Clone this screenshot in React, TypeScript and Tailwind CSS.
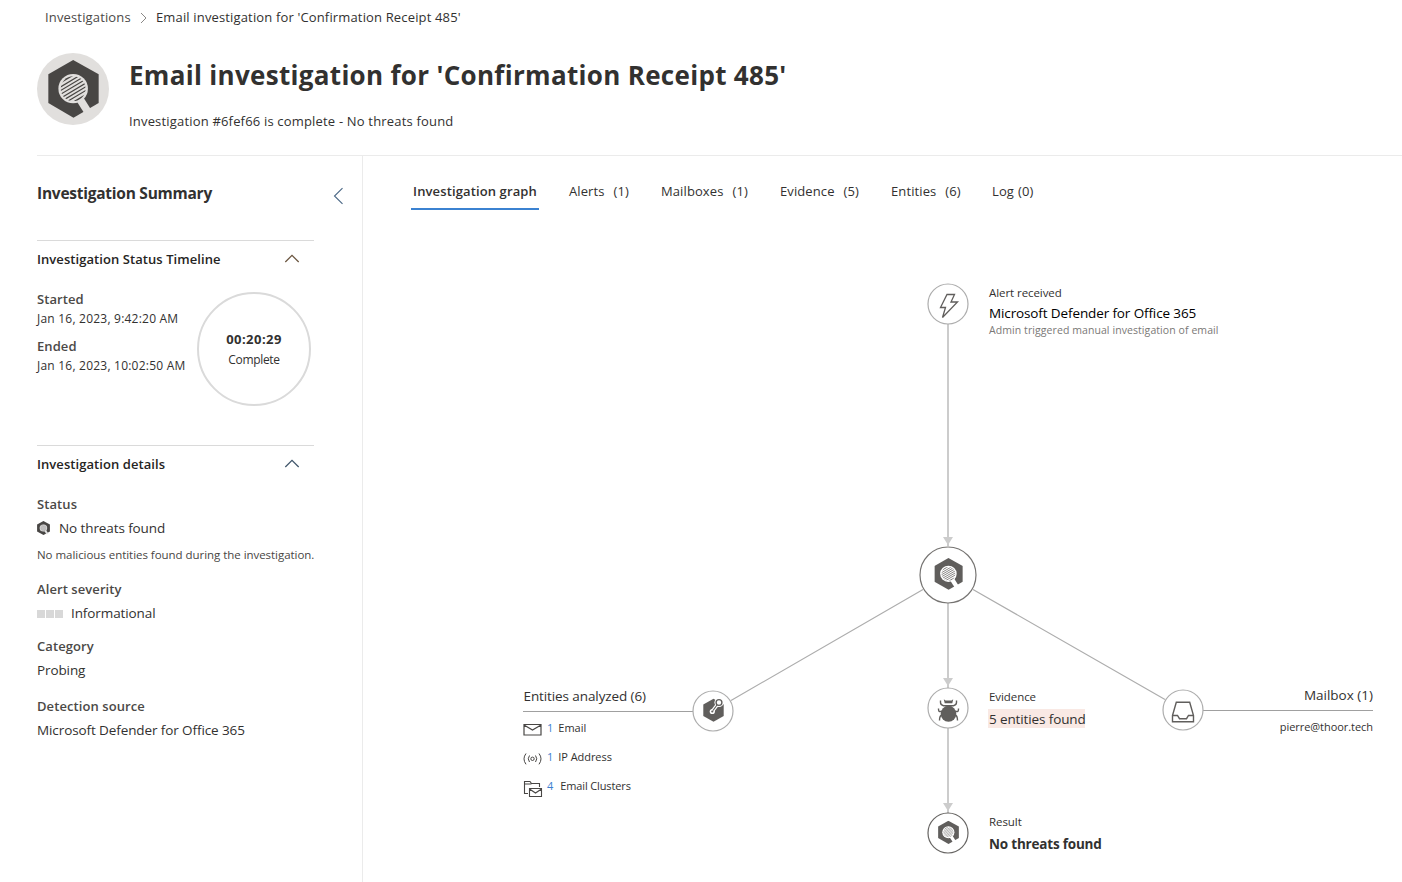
import React from "react";
import type { ReactNode } from "react";

type LensProps = { x?: number; y?: number; width: number; height: number; fill: string; bg: string; id: string; line?: number };

function HexLens({ x, y, width, height, fill, bg, id, line = 3.6 }: LensProps) {
  return (
    <svg x={x} y={y} width={width} height={height} viewBox="53 44 152 174" preserveAspectRatio="none" className="shrink-0">
      <clipPath id={id}>
        <circle cx="128" cy="130" r="37" />
      </clipPath>
      <polygon points="128,44 204,87 204,173 129,217 54,173 54,87" fill={fill} />
      <path d="M146 158 L176 206" stroke={bg} strokeWidth="23" />
      <circle cx="128" cy="130" r="44" fill={bg} />
      <g clipPath={"url(#" + id + ")"}>
        <g transform="rotate(-31 128 130)" stroke={fill} strokeWidth={line}>
          <path d="M84 94H172" strokeWidth={line * 1.8} />
          <path d="M84 106H172M84 115.500H172M84 125H172M84 135H172M84 144.500H172M84 154H172" />
          <path d="M84 166H172" strokeWidth={line * 1.8} />
        </g>
      </g>
    </svg>
  );
}

function ChevronUp({ stroke }: { stroke: string }) {
  return (
    <svg width="16" height="10" viewBox="0 0 16 10" fill="none" stroke={stroke} strokeWidth="1.300">
      <path d="M1.300 8 8 1.400 14.700 8" />
    </svg>
  );
}

const tabs = [
  { label: "Alerts", count: "(1)", cls: "ml-[30px] w-[92px]", gap: "gap-[9px]" },
  { label: "Mailboxes", count: "(1)", cls: "w-[119px]", gap: "gap-[9px]" },
  { label: "Evidence", count: "(5)", cls: "w-[111px]", gap: "gap-[9px]" },
  { label: "Entities", count: "(6)", cls: "w-[101px]", gap: "gap-[9px]" },
  { label: "Log", count: "(0)", cls: "", gap: "gap-[4px]" },
];

function Section({ title, chevron, children }: { title: string; chevron: string; children: ReactNode }) {
  return (
    <section className="w-[277px] border-t border-[#dadada]">
      <div className="flex h-9 items-center justify-between pr-[14px]">
        <h3 className="pt-[2px] text-[13px] font-semibold tracking-[0.065px] text-[#252423]">{title}</h3>
        <ChevronUp stroke={chevron} />
      </div>
      {children}
    </section>
  );
}

function Label({ className, children }: { className: string; children: ReactNode }) {
  return <div className={"text-[13px] leading-5 font-semibold tracking-[0.080px] text-[#4b4947] " + className}>{children}</div>;
}

function Sidebar() {
  return (
    <aside className="h-[727px] w-[326px] shrink-0 border-r border-[#ebebeb]">
      <div className="flex h-[84px] items-start justify-between pt-[25px] pr-[18px]">
        <h2 className="text-[15.5px] leading-6 font-bold tracking-[-0.250px] text-[#323130]">Investigation Summary</h2>
        <svg width="11" height="18" viewBox="0 0 11 18" fill="none" stroke="#4a6785" strokeWidth="1.100" className="mt-[6px]">
          <path d="M9.500 1.200 1.500 9 9.500 16.800" />
        </svg>
      </div>
      <Section title="Investigation Status Timeline" chevron="#6b5640">
        <div className="flex h-[168px] justify-between pr-[3px]">
          <div className="pt-[12px] text-[12px] leading-[18px] tracking-[0.220px] whitespace-nowrap text-[#323130]">
            <Label className="">Started</Label>
            <div className="pt-px">Jan 16, 2023, 9:42:20 AM</div>
            <Label className="mt-[8px]">Ended</Label>
            <div className="pt-px">Jan 16, 2023, 10:02:50 AM</div>
          </div>
          <div className="mt-[15px] flex size-[114px] flex-col items-center rounded-full border-2 border-[#dadada] pt-[35px]">
            <div className="text-[13px] leading-5 font-bold tracking-[0.450px] text-[#323130]">00:20:29</div>
            <div className="pt-px text-[12px] leading-5 tracking-[-0.320px] text-[#323130]">Complete</div>
          </div>
        </div>
      </Section>
      <Section title="Investigation details" chevron="#40566b">
        <div className="pt-[12px] text-[13.500px] leading-5 tracking-[-0.100px] whitespace-nowrap text-[#323130]">
          <Label className="">Status</Label>
          <div className="mt-1 flex items-center gap-[9px]">
            <HexLens id="lens-status" width={13} height={14} fill="#484644" bg="#e6e6e6" line={2.6} />
            <span>No threats found</span>
          </div>
          <div className="mt-[7px] text-[11.500px] tracking-[-0.040px] text-[#484644]">No malicious entities found during the investigation.</div>
          <Label className="mt-[14px]">Alert severity</Label>
          <div className="mt-1 flex items-center gap-2">
            <div className="mt-[2px] flex gap-px">
              <i className="size-2 bg-[#d8d8d8]" />
              <i className="size-2 bg-[#d8d8d8]" />
              <i className="size-2 bg-[#d8d8d8]" />
            </div>
            <span>Informational</span>
          </div>
          <Label className="mt-[13px]">Category</Label>
          <div className="mt-1">Probing</div>
          <Label className="mt-4">Detection source</Label>
          <div className="mt-1">Microsoft Defender for Office 365</div>
        </div>
      </Section>
    </aside>
  );
}

function Graph() {
  return (
    <div className="relative h-[666px] w-[1039px] overflow-hidden whitespace-nowrap text-[#323130]">
      <svg width="1039" height="666" viewBox="363 216 1039 666" className="absolute inset-0" fill="none">
        <g stroke="#cccccc" strokeWidth="2">
          <path d="M948 324V546M948 603V688M948 728V813" />
        </g>
        <g fill="#cccccc">
          <path d="M943 537H953L948 545Z" />
          <path d="M943 678H953L948 686Z" />
          <path d="M943 803H953L948 811Z" />
        </g>
        <g stroke="#adadad" strokeWidth="1.200">
          <path d="M923 589.500 731 700.500M973 589.500 1165 699.500" />
        </g>
        <path d="M523 711.500H693M1203 710.500H1373" stroke="#a0a0a0" />
        <g fill="#fff" stroke="#adadad" strokeWidth="1.200">
          <circle cx="948" cy="304" r="20" />
          <circle cx="713" cy="711" r="20" />
          <circle cx="948" cy="708" r="20" />
          <circle cx="1183" cy="710" r="20" />
        </g>
        <circle cx="948" cy="575" r="28" stroke="#767472" strokeWidth="1.200" fill="#fff" />
        <circle cx="948" cy="833" r="20" stroke="#666462" strokeWidth="1.200" fill="#fff" />

        <path d="M947 294.500H954.500L951 302H957.500L942.500 317.500L945.500 307.500H940.500Z" stroke="#605e5c" strokeWidth="1.300" />
        <HexLens id="lens-center" x={934.3} y={558} width={28.600} height={32} fill="#605e5c" bg="#fff" />
        <HexLens id="lens-result" x={938} y={820.7} width={21} height={23.500} fill="#605e5c" bg="#fff" line={3} />

        <g>
          <path d="M713.500 698.800 723.700 704.500V716L713.500 721.800 703.300 716V704.500Z" fill="#605e5c" />
          <circle cx="719" cy="702.500" r="4.600" fill="#fff" />
          <path d="M717.500 704.500 712.500 711" stroke="#fff" strokeWidth="3.600" />
          <circle cx="712.300" cy="711.500" r="2.600" fill="#fff" />
          <circle cx="719" cy="702.500" r="2.900" stroke="#605e5c" strokeWidth="1.400" />
          <path d="M717 705 713 710.500" stroke="#605e5c" strokeWidth="1.200" />
          <circle cx="712.300" cy="711.500" r="1.100" fill="#605e5c" />
        </g>

        <g stroke="#605e5c" strokeWidth="1.400">
          <ellipse cx="948.500" cy="713.800" rx="7.800" ry="8" fill="#605e5c" stroke="none" />
          <path d="M943.800 699.300 945.500 700.400H951.500L953.200 699.300 952.300 703.200H944.700Z" fill="#605e5c" stroke="none" />
          <path d="M940.500 700.500V702.500Q940.500 705 943.500 705.700H953.500Q956.500 705 956.500 702.500V700.500M942 711.500H939.500Q938.500 711.500 938.500 708.500M955 711.500H957.500Q958.500 711.500 958.500 708.500M942 715Q939.500 715.500 939.500 720.500M955 715Q957.500 715.500 957.500 720.500" />
        </g>

        <g stroke="#605e5c" strokeWidth="1.400">
          <path d="M1172.500 715.500 1176.300 702.300H1189.700L1193.500 715.500V721.700H1172.500ZM1172.500 715.500H1177.500L1179.500 718.700H1186.500L1188.500 715.500H1193.500" />
        </g>

        <g stroke="#484644">
          <path d="M524 724.500H541V735H524ZM524 725 532.500 730 541 725" strokeWidth="1.200" />
          <circle cx="532.500" cy="758.800" r="1.700" />
          <path d="M529.500 755.500Q527 758.800 529.500 762M535.500 755.500Q538 758.800 535.500 762M526 753.500Q522 758.800 526 764.300M539 753.500Q543 758.800 539 764.300" />
          <path d="M528 793.500H524.500V781.500H530L531.500 783.500H539.500V787M524.500 784H530.500L532 783.500M529.500 788.500H541.500V796.500H529.500ZM529.500 789 535.500 793 541.500 789" strokeWidth="1.100" />
        </g>
      </svg>

      <div className="absolute left-[626px] top-[68px] text-[11.500px] leading-[18px] tracking-[-0.070px]">Alert received</div>
      <div className="absolute left-[626px] top-[87px] text-[13.500px] leading-5 tracking-[-0.120px] text-black">Microsoft Defender for Office 365</div>
      <div className="absolute left-[626px] top-[106px] text-[10.500px] leading-4 tracking-[0.080px] text-[#7a7876]">Admin triggered manual investigation of email</div>

      <div className="absolute left-[160.5px] top-[470px] text-[13.500px] leading-5 tracking-[-0.100px]">Entities analyzed (6)</div>
      <div className="absolute left-[184px] top-[503px] flex gap-[5px] text-[11px] leading-[18px]"><span className="text-[#3d7fd0]">1</span>Email</div>
      <div className="absolute left-[184px] top-[532px] flex gap-[5px] text-[11px] leading-[18px] tracking-[-0.050px]"><span className="text-[#3d7fd0]">1</span>IP Address</div>
      <div className="absolute left-[184px] top-[561px] flex gap-[7px] text-[11px] leading-[18px] tracking-[-0.120px]"><span className="text-[#3d7fd0]">4</span>Email Clusters</div>

      <div className="absolute left-[626px] top-[472px] text-[11.500px] leading-[18px] tracking-[-0.070px]">Evidence</div>
      <div className="absolute left-[625px] top-[493px] h-[19px] w-[97px] bg-[#f9e9e4] pl-px text-[13.500px] leading-[20px] tracking-[-0.120px]">5 entities found</div>
      <div className="absolute left-[626px] top-[597px] text-[11.500px] leading-[18px] tracking-[-0.070px]">Result</div>
      <div className="absolute left-[626px] top-[618px] text-[13.500px] leading-5 font-bold tracking-[-0.200px]">No threats found</div>

      <div className="absolute right-[29px] top-[469px] text-[13.500px] leading-5">Mailbox (1)</div>
      <div className="absolute right-[29px] top-[502px] text-[11px] leading-[18px] tracking-[-0.050px]">pierre@thoor.tech</div>
    </div>
  );
}

export default function App() {
  return (
    <div className="h-[882px] w-[1402px] overflow-hidden bg-white font-['Open_Sans',sans-serif] text-[#323130]">
      <nav className="flex h-[34px] items-center pt-px pl-[45px] text-[13px] tracking-[0.150px] whitespace-nowrap">
        <span className="w-[95px] text-[#4b4947]">Investigations</span>
        <svg width="8" height="12" viewBox="0 0 8 12" fill="none" stroke="#8a8886" className="mr-[8px]">
          <path d="M1 1 6 6 1 11" />
        </svg>
        <span>Email investigation for 'Confirmation Receipt 485'</span>
      </nav>
      <header className="ml-[37px] flex h-[122px] gap-5 border-b border-[#ebebeb] pt-[19px] whitespace-nowrap">
        <div className="flex size-[72px] items-center justify-center rounded-full bg-[#e1dfdd]">
          <HexLens id="lens-header" width={51} height={58} fill="#484644" bg="#e1dfdd" />
        </div>
        <div>
          <h1 className="pt-[2px] text-[26px] leading-10 font-bold tracking-[0.310px]">Email investigation for 'Confirmation Receipt 485'</h1>
          <p className="mt-4 text-[13px] leading-5 tracking-[0.180px]">Investigation #6fef66 is complete - No threats found</p>
        </div>
      </header>
      <div className="flex pl-[37px]">
        <Sidebar />
        <main className="w-[1039px] shrink-0">
          <div className="flex h-[60px] pt-[25px] pl-[48px] text-[13px] leading-5 tracking-[0.100px] whitespace-nowrap">
            <div className="h-[29px] w-[128px] border-b-2 border-[#3b82d1] text-center font-semibold tracking-[0.120px]">Investigation graph</div>
            {tabs.map((t) => (
              <div key={t.label} className={"flex " + t.cls + " " + t.gap}>
                <span>{t.label}</span>
                <span>{t.count}</span>
              </div>
            ))}
          </div>
          <Graph />
        </main>
      </div>
    </div>
  );
}
